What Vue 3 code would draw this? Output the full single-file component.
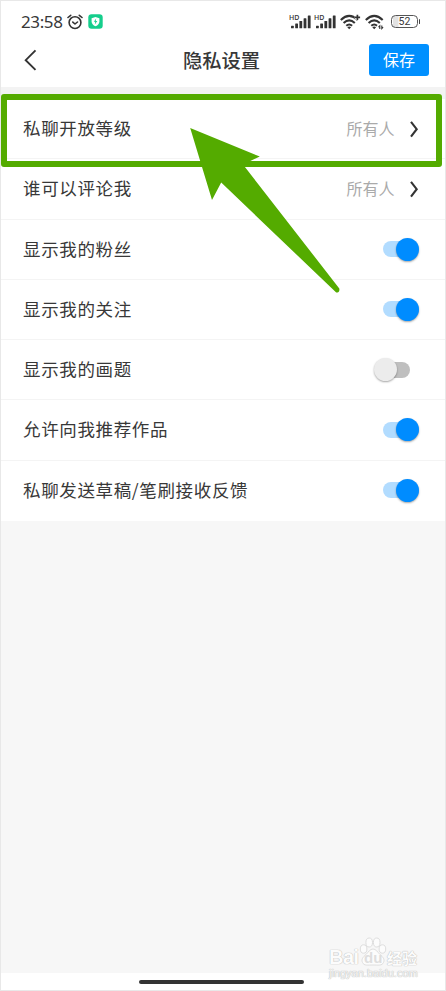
<script setup>
import { ref } from 'vue'

const rows = ref([
  { label: '私聊开放等级', value: '所有人' },
  { label: '谁可以评论我', value: '所有人' },
  { label: '显示我的粉丝', on: true },
  { label: '显示我的关注', on: true },
  { label: '显示我的画题', on: false },
  { label: '允许向我推荐作品', on: true },
  { label: '私聊发送草稿/笔刷接收反馈', on: true },
])

function toggle(row) {
  if (!row.value) row.on = !row.on
}
</script>

<template>
  <div class="screen">
    <header class="status">
      <span class="time">23:58</span>
      <svg class="alarm" width="16" height="16" viewBox="0 0 16 16" fill="none" stroke="#333" stroke-width="1.6" stroke-linecap="round" stroke-linejoin="round">
        <circle cx="8" cy="8.6" r="5.9" />
        <path d="M1 3.5 3.7 1.3M15 3.5l-2.7-2.2M5.8 8.1 8 10l2.5-2" />
      </svg>
      <svg class="shield" width="15" height="15" viewBox="0 0 15 15">
        <rect x=".3" y=".3" width="14.4" height="14.4" rx="3.3" fill="#15ce8c" />
        <path d="M7.5 3 11.4 4.3V7.2c0 2.4-1.5 4-3.9 5.1-2.4-1.1-3.9-2.7-3.9-5.1V4.3z" fill="#fff" />
        <path d="M8.2 4.6 5.8 7.8h1.5l-.5 2.6 2.5-3.3H7.7z" fill="#15ce8c" />
      </svg>
      <div class="spacer"></div>
      <div v-for="n in 2" :key="n" class="signal">
        <span class="hd">HD</span>
        <svg width="22" height="16" viewBox="0 0 22 16" fill="#333">
          <rect x="1" y="11.8" width="2.8" height="2.4" rx=".5" />
          <rect x="5.2" y="9.6" width="2.8" height="4.6" rx=".5" />
          <rect x="9.4" y="7" width="2.8" height="7.2" rx=".5" />
          <rect x="13.6" y="4.2" width="2.8" height="10" rx=".5" />
          <rect x="17.8" y="1.4" width="2.8" height="12.8" rx=".5" />
        </svg>
      </div>
      <svg v-for="k in 2" :key="'w' + k" class="wifi" width="21" height="16" viewBox="0 0 21 16" fill="none" stroke="#333" stroke-width="2.1">
        <path d="M.8 5.9Q9.2-2 17.7 5.9M3.6 9q5.6-5.2 11.2 0M6.3 11.8q2.9-2.6 5.8 0" />
        <path d="M7.3 13.3q1.9-1.5 3.8 0l-1.9 1.9z" fill="#333" stroke="none" />
        <path v-if="k === 1" d="M17.4.7v5.4M14.7 3.4h5.4" stroke="#fff" stroke-width="3.6" />
        <path v-if="k === 1" d="M17.4.7v5.4M14.7 3.4h5.4" stroke-width="1.7" />
        <g v-else>
          <rect x="12.6" y="11" width="7" height="5" fill="#fff" stroke="none" />
          <path d="M14.8 15v-3.2l-1.3 1.4M16.8 11.4v3.2l1.3-1.4" stroke-width="1.1" />
        </g>
      </svg>
      <div class="battery"><span>52</span></div>
    </header>

    <nav class="nav">
      <svg class="back" width="14" height="24" viewBox="0 0 14 24" fill="none" stroke="#333" stroke-width="1.9">
        <path d="M12.5 2.3 2.7 12.2l9.8 9.7" />
      </svg>
      <h1>隐私设置</h1>
      <button type="button">保存</button>
    </nav>

    <main>
      <div v-for="row in rows" :key="row.label" class="row" @click="toggle(row)">
        <span class="label">{{ row.label }}</span>
        <template v-if="row.value">
          <span class="value">{{ row.value }}</span>
          <svg class="chevron" width="10" height="18" viewBox="0 0 10 18" fill="none" stroke="#333" stroke-width="2.1">
            <path d="m2 1.8 5.7 7.4L2 16.6" />
          </svg>
        </template>
        <span v-else class="switch" :class="{ on: row.on }"><i></i></span>
      </div>
    </main>

    <footer><i></i></footer>

    <div class="highlight"></div>
    <svg class="arrow" width="446" height="300" viewBox="0 0 446 300">
      <path d="M190.200 128 259.800 156.500 243 164.500 339.300 288.500Q340 292.500 336.200 292.500L221.200 182.600 212 200z" fill="#54ab00" />
    </svg>

    <div class="watermark">
      <div class="brand">
        <span class="bai">Bai</span>
        <span class="paw">
          <svg width="28" height="30" viewBox="0 0 28 30" fill="#fcfcfc" stroke="#dedede" stroke-width="1">
            <ellipse cx="4.6" cy="12" rx="3.3" ry="4.2" />
            <ellipse cx="10.2" cy="5.5" rx="3.3" ry="4.5" />
            <ellipse cx="17.7" cy="5.5" rx="3.3" ry="4.5" />
            <ellipse cx="23.4" cy="12" rx="3.3" ry="4.2" />
            <path d="M14 12c-3 0-4.500 3-7 5.500-3 2.500-5 5-3.500 8C5 29 9 28 14 28s9 1 10.500-2.500c1.500-3-.5-5.500-3.500-8C18.500 15 17 12 14 12z" />
          </svg>
          <b>du</b>
        </span>
        <span class="jy">经验</span>
      </div>
      <div class="site">jingyan.baidu.com</div>
    </div>
  </div>
</template>

<style>
body {
  background: #f7f7f7;
}
</style>

<style scoped>
.screen {
  position: relative;
  box-sizing: border-box;
  display: flex;
  flex-direction: column;
  height: 991px;
  border: 1px solid #e8e8e8;
  background: #f7f7f7;
  color: #383838;
  font-family: Roboto, "Noto Sans CJK SC", sans-serif;
  overflow: hidden;
}
.status {
  display: flex;
  align-items: center;
  height: 35px;
  padding: 6px 27px 0 20px;
  box-sizing: border-box;
  background: #fff;
}
.time {
  width: 43px;
  font: 17px/20px "Noto Sans", sans-serif;
  letter-spacing: -0.4px;
  white-space: nowrap;
}
.alarm {
  margin-left: 3px;
}
.shield {
  margin-left: 5px;
}
.spacer {
  flex: 1;
}
.signal {
  position: relative;
  width: 22px;
  height: 16px;
  margin-right: 3px;
}
.signal svg {
  display: block;
}
.hd {
  position: absolute;
  left: -1px;
  top: 0;
  font: 600 7px/7px "Open Sans", sans-serif;
}
.wifi {
  margin-left: 4px;
}
.signal + .wifi {
  margin-left: 0;
}
.battery {
  position: relative;
  box-sizing: border-box;
  width: 27px;
  height: 13px;
  margin-left: 5px;
  border: 1.5px solid #555;
  border-radius: 4.5px;
  background: linear-gradient(90deg, #fff 1px, #e2e2e2 1px 6px, #fff 7px);
  text-align: center;
  font: 10.5px/11px Roboto, sans-serif;
}
.battery::after {
  content: "";
  position: absolute;
  right: -3px;
  top: 3px;
  width: 1.5px;
  height: 5px;
  border-radius: 1px;
  background: #444;
}
.nav {
  display: grid;
  grid-template-columns: 60px 1fr 60px;
  align-items: center;
  height: 51px;
  padding: 0 16px 3px 22px;
  box-sizing: border-box;
  background: #fff;
}
.nav h1 {
  margin: 0;
  padding-right: 9px;
  text-align: center;
  font: 500 19.3px/28px "Noto Sans CJK SC", sans-serif;
}
.nav button {
  height: 32px;
  padding: 0 0 2px;
  border: 0;
  border-radius: 3px;
  background: #0090ff;
  color: #fff;
  font: 16px/28px "Noto Sans CJK SC", sans-serif;
}
main {
  padding-top: 12px;
  background: #f3f3f3;
}
.row {
  display: flex;
  align-items: center;
  height: 60.25px;
  box-sizing: border-box;
  padding: 0 26px 0 22px;
  border-bottom: 1px solid #f4f4f4;
  background: #fff;
}
.row:last-child {
  border-bottom-color: #fff;
}
.label {
  flex: 1;
  margin-top: -1px;
  font: 17.5px/26px "Noto Sans CJK SC", sans-serif;
  letter-spacing: 0.64px;
}
.value {
  margin: -1px -0.5px 0 0;
  color: #aaa;
  font: 16px/24px "Noto Sans CJK SC", sans-serif;
}
.chevron {
  margin-left: 15px;
}
.switch {
  display: flex;
  align-items: center;
  justify-content: flex-start;
  width: 28px;
  height: 16px;
  margin-right: 9px;
  border-radius: 8px;
  background: #bfbfbf;
}
.switch i {
  flex: none;
  width: 23px;
  height: 23px;
  margin: 0 -8.5px;
  border-radius: 50%;
  background: #ececec;
  box-shadow: 0 1px 2px rgba(0, 0, 0, 0.35);
}
.switch.on {
  justify-content: flex-end;
  width: 36px;
  margin-right: 0;
  background: #b2dcff;
}
.switch.on i {
  margin: 0;
  background: #008cff;
}
footer {
  display: flex;
  align-items: center;
  justify-content: center;
  height: 17px;
  margin-top: auto;
  background: #fff;
}
footer i {
  width: 165px;
  height: 4px;
  margin-right: 3px;
  border-radius: 2px;
  background: #333;
}
.highlight {
  position: absolute;
  left: 0;
  top: 93px;
  box-sizing: border-box;
  width: 441px;
  height: 73px;
  border: 6px solid #54ab00;
  border-radius: 3px;
}
.arrow {
  position: absolute;
  left: -1px;
  top: -1px;
}
.watermark {
  position: absolute;
  left: 328px;
  top: 936px;
  width: 92px;
  color: #fcfcfc;
  text-shadow: 0 0 1px #bbb, 0 0 1px #bbb;
}
.brand {
  display: flex;
  align-items: flex-end;
  height: 30px;
}
.bai {
  width: 30px;
  font: bold 20px/20px "Liberation Sans", sans-serif;
  letter-spacing: -0.5px;
}
.paw {
  position: relative;
  width: 28px;
  height: 30px;
}
.paw b {
  position: absolute;
  left: 5px;
  top: 13px;
  color: #dedede;
  text-shadow: none;
  font: bold 15px/15px "Liberation Sans", sans-serif;
}
.jy {
  font: bold 15px/18px "Noto Sans CJK SC", sans-serif;
}
.site {
  color: #f4f4f4;
  font: 11px/12px "Liberation Sans", sans-serif;
  white-space: nowrap;
}
</style>
